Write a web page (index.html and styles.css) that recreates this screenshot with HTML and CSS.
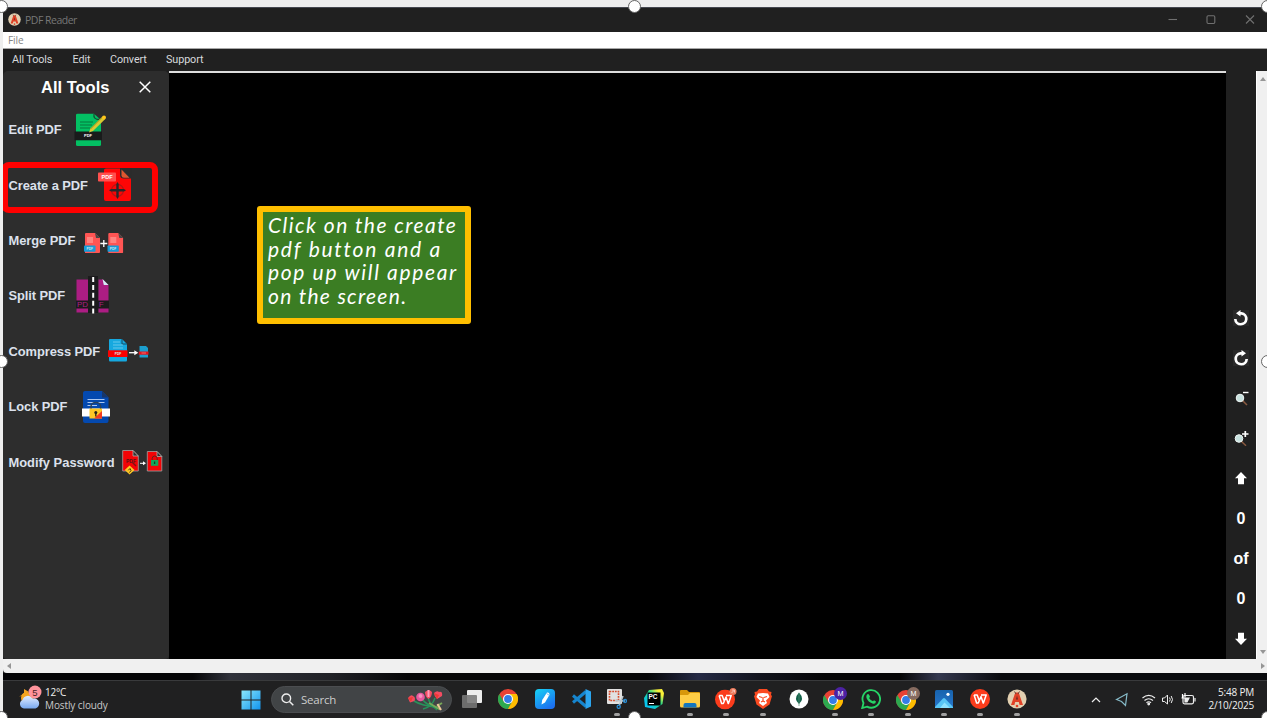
FILE: index.html
```html
<!DOCTYPE html>
<html lang="en">
<head>
<meta charset="utf-8">
<title>PDF Reader</title>
<link rel="stylesheet" href="styles.css">
</head>
<body>
<svg class="defs" width="0" height="0">
  <defs>
    <linearGradient id="win" x1="0" y1="0" x2="1" y2="1"><stop offset="0" stop-color="#8ae8fb"/><stop offset="1" stop-color="#1193ee"/></linearGradient>
    <linearGradient id="pen" x1="0" y1="0" x2=".6" y2="1"><stop offset="0" stop-color="#17d3f5"/><stop offset="1" stop-color="#1c72f0"/></linearGradient>
    <linearGradient id="pyc" x1="0" y1="1" x2="1" y2="0"><stop offset=".2" stop-color="#08c5ee"/><stop offset=".55" stop-color="#21d789"/><stop offset=".8" stop-color="#f8ef38"/></linearGradient>
    <linearGradient id="cloud" x1="0" y1="0" x2="0" y2="1"><stop offset="0" stop-color="#e2edff"/><stop offset="1" stop-color="#78a8ef"/></linearGradient>
    <linearGradient id="photo" x1="0" y1="0" x2="0" y2="1"><stop offset="0" stop-color="#1763ae"/><stop offset="1" stop-color="#2877cc"/></linearGradient>
    <symbol id="chrome" viewBox="0 0 20 20">
      <circle cx="10" cy="10" r="10" fill="#e94235"/>
      <path d="M1.3 5A10 10 0 0 0 10 20L14.3 12.5 10 10 5.7 12.5Z" fill="#2da94f"/>
      <path d="M18.7 5A10 10 0 0 1 10 20L14.3 12.5 10 5Z" fill="#fdbd00"/>
      <circle cx="10" cy="10" r="5" fill="#fff"/><circle cx="10" cy="10" r="3.9" fill="#347de8"/>
    </symbol>
    <symbol id="wps" viewBox="0 0 20 20">
      <circle cx="10" cy="10" r="10" fill="#fb3c1c"/>
      <path d="M4.1 6L6.6 14H8.300L11 7.500 13.200 14H13.400L16.200 6H11M4.100 6H7.200L9 11" fill="none" stroke="#fff" stroke-width="1.500" stroke-linejoin="round"/>
    </symbol>
    <symbol id="appmark" viewBox="0 0 20 20">
      <circle cx="10" cy="10" r="9.6" fill="#e2cfb0"/>
      <path d="M4 16L8.3 3.5H11.7L16 16H12.6L11.8 13H8.2L7.4 16Z" fill="#e04126"/>
      <path d="M9 10.5L10 6.5 11 10.5Z" fill="#6a2a20"/><path d="M7.5 2.5L9 5M12.5 2.5L11 5" stroke="#6b4336"/><circle cx="10" cy="17" r="1.3" fill="#e04126"/>
    </symbol>
    <symbol id="mergefile" viewBox="0 0 16 21">
      <path d="M1 1Q1 0 2 0H11L16 5V19Q16 20 15 20H1Z" fill="#ff5554"/><path d="M11 0L16 5H12Z" fill="#464646"/>
      <path d="M3 4H9V10H3Z" fill="#ff8480"/><rect y="12.5" width="11.5" height="6.3" rx=".8" fill="#169bd8"/>
      <text x="2.500" y="16.900" class="t-merge">PDF</text>
    </symbol>
  </defs>
</svg>

<div class="screen">
  <main class="app">
    <header class="titlebar">
      <svg class="logo" width="13" height="13"><use href="#appmark"/></svg>
      <span class="title">PDF Reader</span>
      <svg class="winctl" width="88" height="14" viewBox="1168 13 88 14" fill="none" stroke="#707070" stroke-width="1.1">
        <path d="M1168.5 19.5H1177"/><rect x="1207" y="15.7" width="7.8" height="7.8" rx="1.2"/><path d="M1246 15.5L1254 23.5M1254 15.5L1246 23.5"/>
      </svg>
    </header>
    <div class="filemenu">File</div>
    <nav class="menubar"><span class="m1">All Tools</span><span class="m2">Edit</span><span class="m3">Convert</span><span class="m4">Support</span></nav>

    <div class="workspace">
      <aside class="tools">
        <div class="tools-head"><h1>All Tools</h1>
          <svg width="12" height="12" viewBox="0 0 12 12"><path d="M.7.7L11.3 11.3M11.3.7L.7 11.3" stroke="#fff" stroke-width="1.5"/></svg>
        </div>
        <div class="tool edit"><span>Edit PDF</span>
          <svg width="34" height="36" viewBox="73 112 34 36">
            <path d="M76 115Q76 113.700 77.500 113.700H94L101 120V144.500Q101 146 99.500 146H77.500Q76 146 76 144.500Z" fill="#03c063"/>
            <path d="M94 114Q93 119.500 99.500 119.500" fill="none" stroke="#174f33" stroke-width="1.3"/>
            <path d="M80 122H93M80 125H92M80 128H90" stroke="#06763e"/>
            <path d="M74.500 131.500H102V140.300H74.500Z" fill="#191b1b"/>
            <text x="84" y="137.300" class="t-pdf">PDF</text>
            <path d="M89 132.500L90.500 128.500 102.500 116.500 105 119.200 93 131Z" fill="#d8c832"/><path d="M90.500 129L102.500 117" stroke="#9c9622"/>
            <circle cx="104" cy="117.600" r="2" fill="#ffc51b"/>
          </svg></div>
        <div class="tool create"><span>Create a PDF</span>
          <svg width="36" height="36" viewBox="97 168 36 36">
            <path d="M104 171Q104 169.500 106 169.500H121L131 179V200Q131 202 129 202H106Q104 202 104 200Z" fill="#fe0606"/>
            <path d="M120 169V176Q120 179.500 124 179.500H132V169Z" fill="#2c2c2c"/><path d="M121.500 170.500L129.500 178.800H124Q121.500 178.800 121.500 176.500Z" fill="#df5630"/>
            <rect x="98" y="173.500" width="18" height="9" rx=".8" fill="#ff504e"/><text x="101.500" y="180.200" class="t-create">PDF</text>
            <circle cx="117.500" cy="191.300" r="6" fill="none" stroke="#b31616" stroke-width="1.200"/>
            <path d="M116.300 185L117.500 183 118.700 185V190H124L126 191.300 124 192.500H118.700V198L117.500 200 116.300 198V192.500H111L109 191.300 111 190H116.300Z" fill="#28282b"/>
          </svg></div>
        <div class="tool merge"><span>Merge PDF</span>
          <svg width="42" height="22" viewBox="83 233 42 22"><use href="#mergefile" x="84" y="234" width="16" height="21"/><use href="#mergefile" x="107.300" y="234" width="16" height="21"/><path d="M103.800 241V248M100.300 244.500H107.300" stroke="#fff" stroke-width="1.300"/></svg></div>
        <div class="tool split"><span>Split PDF</span>
          <svg width="36" height="40" viewBox="75 275 36 40">
            <path d="M76.500 279.500H88V312.500H76.500ZM98.500 279.500H103L108.500 285V312.500H98.500Z" fill="#ac1d83"/><path d="M102.500 279L108.500 285H103.800Z" fill="#d5edf7"/>
            <path d="M76 300.500H88V308.500H76ZM98 300.500H109V308.500H98ZM88 276H98V313H88Z" fill="#1c1b1d"/>
            <text x="77" y="307.300" class="t-split">PD</text><text x="98.800" y="307.300" class="t-split">F</text>
            <path d="M93.200 277V315" stroke="#fff" stroke-width="2" stroke-dasharray="5 2.900"/>
          </svg></div>
        <div class="tool compress"><span>Compress PDF</span>
          <svg width="42" height="26" viewBox="108 339 42 26">
            <path d="M109 341Q109 340 110 340H122L127 345V361Q127 362.500 126 362.500H110Q109 362.500 109 361Z" fill="#16a8df"/><path d="M122 340V345H127" fill="none" stroke="#174a64"/><path d="M113 343H120M113 346H123M113 349H123" stroke="#78d1ee" stroke-width=".8"/>
            <rect x="108" y="351.300" width="19.500" height="6.700" fill="#fb0000"/><text x="114.800" y="356.400" class="t-tiny">PDF</text>
            <path d="M129 353.700H136" stroke="#fff" stroke-width="1.300"/><path d="M134.300 351.200L138.300 353.700 134.300 356.200Z" fill="#fff"/>
            <path d="M139.500 347H146L148 349V358.500H139.500Z" fill="#1b9ece"/><rect x="138.800" y="352.500" width="9.700" height="3.200" fill="#e71319"/><path d="M141.500 354H146" stroke="#ed9b9d" stroke-width=".7"/>
          </svg></div>
        <div class="tool lock"><span>Lock PDF</span>
          <svg width="30" height="34" viewBox="81 390 30 34">
            <path d="M83 393Q83 391 85 391H102L108.500 397.500V421Q108.500 423 106.500 423H85Q83 423 83 421Z" fill="#0449af"/><path d="M102 391V397.500H108.500Z" fill="#17366a"/>
            <path d="M87.500 399.500H104.500M87.500 402.500H104.500M87.500 405.500H97" stroke="#d8e7ff" stroke-width=".8"/><path d="M82 408.500H110V416.500H82Z" fill="#fff"/>
            <path d="M91 409V406.500A4.800 4 0 0 1 100.600 406.500V409" fill="none" stroke="#29415d" stroke-width="1.500"/>
            <path d="M89.500 408.500H102V418.500H89.500Z" fill="#fdc727"/><path d="M102 411V418.500H94Z" fill="#f33b22"/><circle cx="95.800" cy="412.500" r="1.500" fill="#262318"/><path d="M95.800 413V416.500" stroke="#262318" stroke-width="1.300"/>
          </svg></div>
        <div class="tool modify"><span>Modify Password</span>
          <svg width="42" height="26" viewBox="121 450 42 26">
            <path d="M122.700 451.500H133L138.300 457V472H122.700Z" fill="#f40306" stroke="#a2a2a2" stroke-width=".8"/><path d="M133 451.500V457H138.300Z" fill="#333" stroke="#bbb" stroke-width=".7"/>
            <text x="126" y="463.500" class="t-dark">PDF</text><path d="M132 463L136 467" stroke="#7d1414" stroke-width="1.500"/>
            <path d="M129.600 466.500L134.500 471 129.600 475.500 124.700 471Z" fill="#ffc724"/><path d="M128.300 471.300L130 469.500 131 471.500 129.500 473.500" fill="none" stroke="#473a13"/>
            <path d="M140 464.300H144" stroke="#fff"/><path d="M143 462.300L146 464.300 143 466.300Z" fill="#fff"/>
            <path d="M147.300 452.500H157L161.800 457.500V472H147.300Z" fill="#f40306" stroke="#a2a2a2" stroke-width=".8"/><path d="M157 452.500V457.500H161.800Z" fill="#333" stroke="#bbb" stroke-width=".7"/>
            <path d="M152.200 461.500V459.500A2.500 2.500 0 0 1 157.200 459.500V461.500" fill="none" stroke="#67211d"/><rect x="151" y="461" width="7.300" height="5.800" fill="#14a55a"/><path d="M154.600 462.500V465" stroke="#123d24" stroke-width="1.300"/>
          </svg></div>
      </aside>

      <section class="document"><p class="callout"><span class="c1">Click on the create</span><span class="c2">pdf button and a</span><span class="c3">pop up will appear</span><span class="c4">on the screen.</span></p></section>

      <aside class="viewer">
        <svg width="16" height="16" viewBox="0 0 16 16"><rect width="16" height="16" fill="#292929"/><path d="M5 3.300H8.500A5.500 5.500 0 1 1 2.300 9" fill="none" stroke="#fff" stroke-width="2.700"/><path d="M3 3.300L7.500 0V6.500Z" fill="#fff"/></svg>
        <svg width="16" height="16" viewBox="0 0 16 16"><rect width="16" height="16" fill="#292929"/><path d="M11 3.300H7.500A5.500 5.500 0 1 0 13.700 9" fill="none" stroke="#fff" stroke-width="2.700"/><path d="M13 3.300L8.500 0V6.500Z" fill="#fff"/></svg>
        <svg width="16" height="16" viewBox="0 0 16 16"><path d="M9 10L14 15" stroke="#8a5a40" stroke-width="1.500"/><circle cx="7" cy="8" r="3.800" fill="#c8e2df" stroke="#f0f6f5"/><path d="M10 2.500H15.500" stroke="#fff" stroke-width="1.400"/></svg>
        <svg width="16" height="16" viewBox="0 0 16 16"><path d="M8 11L13 15.700" stroke="#8a5a40" stroke-width="1.500"/><circle cx="6" cy="8.500" r="3.800" fill="#c8e2df" stroke="#f0f6f5"/><path d="M9 4H15.500M12.300 1V7" stroke="#fff" stroke-width="1.700"/></svg>
        <svg width="14" height="14" viewBox="0 0 14 14"><path d="M7 1L13 7.300H10V13.300H4V7.300H1Z" fill="#fff"/></svg>
        <b>0</b><b>of</b><b>0</b>
        <svg width="14" height="14" viewBox="0 0 14 14"><path d="M7 13L13 6.700H10V.700H4V6.700H1Z" fill="#fff"/></svg>
      </aside>
      <div class="vscroll"><svg width="8" height="6"><path d="M1 5L4 1 7 5Z"/></svg><svg width="8" height="6"><path d="M1 1L4 5 7 1Z"/></svg></div>
    </div>
    <div class="hscroll"><svg width="6" height="8"><path d="M5 1L1 4 5 7Z"/></svg><svg width="6" height="8"><path d="M1 1L5 4 1 7Z"/></svg></div>
  </main>

  <div class="wallpaper"></div>
  <footer class="taskbar">
    <div class="weather">
      <svg width="24" height="26" viewBox="18 684 24 26"><circle cx="27" cy="697" r="6" fill="#f4a51e"/><path d="M19 696L24 692V688L29 691Z" fill="#f4a51e"/><path d="M24 707.500A4.500 4.500 0 0 1 22.500 699 5.500 5.500 0 0 1 32.500 697.500 5 5 0 0 1 35.500 707.500Z" fill="url(#cloud)"/><circle cx="35" cy="691" r="6.500" fill="#ff939c"/><text x="32.300" y="694.600" class="t-badge">5</text></svg>
      <div><span>12°C</span><span class="cloudy">Mostly cloudy</span></div>
    </div>
    <svg class="start" width="20" height="20" viewBox="0 0 20 20"><path d="M.5.500H9.500V9.500H.5ZM10.500.500H19.500V9.500H10.500ZM.5 10.500H9.500V19.500H.5ZM10.500 10.500H19.500V19.500H10.500Z" fill="url(#win)"/></svg>
    <div class="search">
      <svg width="13" height="13" viewBox="0 0 13 13"><circle cx="5.300" cy="5.300" r="4.300" fill="none" stroke="#eee" stroke-width="1.400"/><path d="M8.500 8.500L12.300 12.300" stroke="#eee" stroke-width="1.500"/></svg>
      <span>Search</span>
      <svg width="38" height="22" viewBox="408 689 38 22"><path d="M415 701Q423 706 438 707M422 698Q429 707 441 709M429 697Q430 704 438 710M436 698Q433 707 424 709" fill="none" stroke="#27945b" stroke-width="1.500"/><path d="M430 703L441 709.500M438 706L443 703" stroke="#78a857" stroke-width="2"/><path d="M409 698Q412 694 414 696 417 697 415.500 701L411 702.500ZM426 692Q430 688.500 433 692 433 697 429.500 699 426 697 426 692ZM435 693Q438 690 440 692 444 691 443 696L438 699Q435 696 435 693Z" fill="#f44c62"/><path d="M409 698L414 697 412 702ZM435 693L440 695 438 699Z" fill="#ee3934"/><circle cx="421.500" cy="697" r="4.300" fill="#e6589e"/><circle cx="421.500" cy="696" r="2" fill="#f691bd"/><path d="M429.500 690V697" stroke="#ff9dbb" stroke-width="2"/><path d="M438.500 704L442 710" stroke="#efc69a" stroke-width="2"/></svg>
    </div>
    <div class="apps">
      <div><svg width="20" height="20" viewBox="0 0 20 20"><rect x="5" y="1" width="15" height="13" rx="1" fill="#ededed"/><rect x="0" y="6" width="15" height="13" rx="1" fill="#777" fill-opacity=".88"/></svg></div>
      <div><svg width="20" height="20"><use href="#chrome"/></svg></div>
      <div><svg width="20" height="20" viewBox="0 0 20 20"><rect width="20" height="20" rx="4" fill="url(#pen)"/><path d="M6.500 15.500L7.200 11 12 3.500Q14.500 3 14.500 5.800L10 13.500Z" fill="#fff"/><path d="M11.500 4.500L14.200 6.300" stroke="#71c5fa"/></svg></div>
      <div><svg width="20" height="20" viewBox="0 0 20 20"><path d="M15 2.500L2 13.500M15 17.500L2 6.500" stroke="#1685ce" stroke-width="3"/><path d="M14.500 0L20 2.500V17.500L14.500 20Z" fill="#2ba5ef"/></svg></div>
      <div class="open"><svg width="20" height="20" viewBox="0 0 20 20"><rect x="0" y="0" width="15" height="15" rx="1" fill="#e1e1e1"/><rect x="2.500" y="2.500" width="9" height="9" fill="none" stroke="#d74d2e" stroke-width="1.600" stroke-dasharray="1.800 .9"/><path d="M12 17L16 7M8 11.500L18 12" stroke="#b9c6ce" stroke-width="1.600"/><circle cx="11.700" cy="17.800" r="1.600" fill="none" stroke="#258ad2" stroke-width="1.300"/><circle cx="18" cy="12" r="1.500" fill="none" stroke="#258ad2" stroke-width="1.300"/></svg></div>
      <div><svg width="20" height="20" viewBox="0 0 20 20"><path d="M5 1L18 0 20 4 18.500 15 11 20 1 18 0 9Z" fill="url(#pyc)"/><rect x="3.500" y="3.500" width="13" height="13" fill="#000"/><text x="4.500" y="10" class="t-pc">PC</text><path d="M5 14.500H10" stroke="#fff"/></svg></div>
      <div class="open"><svg width="20" height="20" viewBox="0 0 20 20"><path d="M0 2Q0 1 1 1H7L9 3H19Q20 3 20 4V9H0Z" fill="#d8980b"/><path d="M0 6H8L10 4H19.200Q20 4 20 5V17Q20 18.500 18.500 18.500H1.500Q0 18.500 0 17Z" fill="#ffcd45"/><path d="M3.500 18.500V16Q3.500 14 5.500 14H14.500Q16.500 14 16.500 16V18.500Z" fill="#1475be"/></svg></div>
      <div class="open"><svg width="22" height="22" viewBox="0 0 22 22"><use href="#wps" x="0" y="1.500" width="20" height="20"/><circle cx="18" cy="3.500" r="3.500" fill="#ed7b5c"/><path d="M16.500 5L19.500 2M17 2H19.500V4.500" fill="none" stroke="#f7c5b8"/></svg></div>
      <div class="open"><svg width="18" height="20" viewBox="0 0 18 20"><path d="M5 0H13L15 2.500 17.500 3 17 6 18 7 15.500 15.500 9 20 2.500 15.500 0 7 1 6 .5 3 3 2.500Z" fill="#fb4a20"/><path d="M4 4.500L9 4 14 4.500 15.500 8 12 11.500 13 14 9 17 5 14 6 11.500 2.500 8Z" fill="#fff"/><path d="M5 7.500L8 8.500M13 7.500L10 8.500M9 8V12M7 13L9 12 11 13" fill="none" stroke="#fb4a20" stroke-width="1.200"/></svg></div>
      <div><svg width="20" height="20" viewBox="0 0 20 20"><circle cx="10" cy="10" r="9.500" fill="#fff"/><path d="M10 3.500Q4 10 10 15Q16 10 10 3.500Z" fill="#126149"/><path d="M10 4V17" stroke="#59927b" stroke-width=".7"/></svg></div>
      <div class="open"><svg width="24" height="24" viewBox="0 0 24 24"><use href="#chrome" x="0" y="3" width="20" height="20"/><circle cx="17.500" cy="6.500" r="6.500" fill="#4c22a4"/><text x="14.500" y="9" class="t-m">M</text></svg></div>
      <div class="open"><svg width="20" height="20" viewBox="0 0 20 20"><path d="M1.200 19L2.500 14A8.800 8.800 0 1 1 6 17.600Z" fill="none" stroke="#26d467" stroke-width="1.800"/><path d="M6 5.500Q7.500 4 8.500 6.500L9 8 8 9Q9.500 11.500 12 12.300L13 11.200 15 12.500Q14.500 15.500 11.500 14.500 7 13 5.500 9 5 6.500 6 5.500Z" fill="#26d467"/></svg></div>
      <div class="open"><svg width="24" height="24" viewBox="0 0 24 24"><use href="#chrome" x="0" y="3" width="20" height="20"/><circle cx="17.500" cy="6.500" r="6.500" fill="#866b60"/><text x="14.500" y="9" class="t-m">M</text></svg></div>
      <div class="open"><svg width="18" height="18" viewBox="0 0 18 18"><rect width="18" height="18" rx="1.500" fill="url(#photo)"/><path d="M0 17L8 8.500Q9 7.500 10 8.500L18 17V18H0Z" fill="#58c6f6"/><path d="M5 18L9.500 12.500 15 18Z" fill="#8ee3ff"/><circle cx="13" cy="4.300" r="1.600" fill="#fff"/></svg></div>
      <div class="open"><svg width="20" height="20"><use href="#wps"/></svg></div>
      <div class="open"><svg width="20" height="20"><use href="#appmark"/></svg></div>
    </div>
    <svg class="tray" width="106" height="16" viewBox="1090 692 106 16" fill="none" stroke="#eee" stroke-width="1.200">
      <path d="M1092 702L1096 698 1100 702"/><path d="M1116.500 699.500L1127 693.800 1125.500 705.500 1121.500 701.500Z" stroke="#87bbc9"/>
      <path d="M1142.500 698Q1148.700 692.800 1155 698M1144.500 700.500Q1148.700 697 1153 700.500M1146.500 702.700Q1148.700 700.800 1151 702.700"/><circle cx="1148.700" cy="704" r=".8" fill="#eee"/>
      <path d="M1162.500 698H1164.500L1167.500 695V704L1164.500 701.500H1162.500ZM1169.500 697.500Q1171 699.500 1169.500 701.500M1171.200 696Q1173.800 699.500 1171.200 703" stroke-width="1"/>
      <rect x="1183" y="695.500" width="10.500" height="8.300" rx="1.500"/><path d="M1195 698V701.500"/><path d="M1185 698H1189L1187 702H1185Z" fill="#eee"/><path d="M1182.500 694V698M1185 693V697M1181.500 698H1185.500" stroke="#fff"/>
    </svg>
    <div class="clock"><span class="time">5:48 PM</span><span>2/10/2025</span></div>
  </footer>

  <div class="highlight"></div>
  <i class="handle tl"></i><i class="handle tc"></i><i class="handle tr"></i><i class="handle ml"></i><i class="handle mr"></i><i class="handle bl"></i><i class="handle bc"></i><i class="handle br"></i>
</div>
</body>
</html>
```

FILE: styles.css
```css
* { box-sizing: border-box; }
body { margin: 0; background: #eee; overflow: hidden; font-family: "Liberation Sans", Arial, sans-serif; }
svg { display: block; flex: none; }
.defs { position: absolute; }
.screen { position: relative; width: 1267px; height: 718px; padding: 7px 0 0 3px; overflow: hidden; background: #eee; display: flex; flex-direction: column; }
.app { height: 666px; flex: none; background: #202020; border-top: 1px solid #454850; }
.titlebar { height: 24px; display: flex; align-items: center; padding: 0 0 1px 5px; color: #777; font: 10.5px "Open Sans", sans-serif; background: #202020; }
.title { margin-left: 4px; letter-spacing: -.5px; }
.winctl { margin-left: auto; margin-right: 11px; }
.filemenu { height: 17px; padding-left: 5px; background: #fff; border-bottom: 1px solid #a7a7a7; color: #858585; font: 10px/17px "Open Sans", sans-serif; letter-spacing: -.1px; }
.menubar { height: 22px; display: flex; align-items: center; padding: 0 0 2px 9px; color: #d7d9dc; font: 10.8px Roboto, sans-serif; letter-spacing: -.1px; }
.m1 { width: 60.500px; } .m2 { width: 37.5px; } .m3 { width: 56px; }
.workspace { height: 588px; display: grid; grid-template-columns: 166px 1057px 30px 11px; }
.tools { background: #2d2d2d; border-radius: 5px 5px 4px 4px; color: #dce1ec; }
.tools-head { height: 31px; display: flex; align-items: center; padding-left: 38px; }
.tools-head h1 { width: 98px; margin: 0; color: #fff; font-size: 16.500px; line-height: 20px; }
.tool { height: 55.400px; display: flex; align-items: center; padding-left: 5.500px; font-weight: bold; font-size: 12.900px; white-space: nowrap; }
.tool span { flex: none; letter-spacing: -.07px; }
.edit span { width: 64.500px; } .create span { width: 88.500px; } .merge span { width: 74.500px; } .split span { width: 66.500px; } .compress span { width: 99.500px; } .lock span { width: 72.500px; } .modify span { width: 112.500px; letter-spacing: 0; }
.merge svg { margin-top: 5px; }
.split svg { margin-top: -1px; }
.document { background: #000; border-top: 2px solid #ddd; padding: 133px 0 0 88px; }
.callout { width: 214px; height: 118px; margin: 0; padding: 1px 0 0 5px; border: 6px solid #ffbf00; border-radius: 3px; background: #3b7d23; color: #fff; font: italic 21px/23.500px Lato, sans-serif; white-space: nowrap; }
.callout span { display: block; height: 23.500px; }
.c1 { letter-spacing: 1.450px; } .c2 { letter-spacing: 1.750px; } .c3 { letter-spacing: 1.650px; } .c4 { letter-spacing: 1.300px; }
.viewer { background: #202020; display: grid; grid-auto-rows: 40.200px; justify-items: center; align-items: center; align-content: start; padding-top: 226.500px; color: #fff; font-size: 16px; }
.viewer b { padding-top: 1px; }
.vscroll { background: #f0f0f0; border-left: 1px solid #fff; display: flex; flex-direction: column; justify-content: space-between; padding: 5px 0 4px 2px; fill: #969696; }
.hscroll { height: 14px; background: #f0f0f0; border-radius: 0 0 0 4px; display: flex; align-items: center; justify-content: space-between; padding: 0 1px 0 3px; fill: #969696; }
.wallpaper { height: 7px; flex: none; background: linear-gradient(90deg, #050507 0 15%, #30323b 18%, #202126 26%, #060607 32% 51%, #252a45 55%, #11131c 60%, #050506 65% 71%, #34384f 74%, #090a0d 79%); }
.taskbar { height: 38px; flex: none; display: flex; align-items: center; background: #202021; border-top: 1px solid #393a3c; color: #f0f0f0; font: 10px/13px "Open Sans", sans-serif; }
.weather { width: 237.500px; height: 37px; padding: 0 0 3px 15px; display: flex; align-items: center; }
.weather div { margin-left: 3px; padding-top: 2px; }
.weather span, .clock span { display: block; letter-spacing: -.2px; }
.weather .cloudy { color: #c9c9c9; letter-spacing: -.1px; }
.search { width: 181px; height: 27px; margin-left: 10px; border-radius: 14px; background: #414446; border: 1px solid #4b4d50; display: flex; align-items: center; padding: 0 6px 0 9px; font-size: 11.500px; color: #ccc; }
.search span { margin-left: 7.500px; letter-spacing: -.2px; }
.search svg:last-child { margin-left: auto; }
.apps { width: 581px; height: 37px; margin-left: 2.500px; display: grid; grid-template-columns: repeat(16, 36.300px); }
.apps > div { display: grid; grid-template-rows: 30px 3px; align-items: center; justify-items: center; padding-top: 3px; }
.apps .open::after { content: ""; width: 6px; height: 3px; border-radius: 2px; background: #a0a0a0; margin-top: -3px; }
.tray { margin-left: 55px; }
.clock { margin-left: auto; padding: 0 13px 2px 0; text-align: right; }
.handle { position: absolute; width: 13px; height: 13px; border-radius: 50%; background: #fff; border: 1px solid #656565; }
.tl, .ml, .bl { left: -5px; } .tc, .bc { left: 628px; } .tr, .mr, .br { left: 1261px; }
.tl, .tc, .tr { top: 0; } .ml, .mr { top: 355px; } .bl, .bc, .br { top: 711px; }
.highlight { position: absolute; left: 1px; top: 162px; width: 157px; height: 51px; border: 6px solid #f00; border-left-width: 7px; border-radius: 8px; clip-path: inset(0 0 0 2px); }
text { font-family: "Liberation Sans", sans-serif; font-weight: bold; }
.t-pdf { font-size: 4px; fill: #fff; }
.t-create { font-size: 5.500px; fill: #fff; }
.t-merge, .t-tiny { font-size: 3.200px; fill: #d7e9ef; }
.t-split { font-size: 8px; font-weight: normal; fill: #ac1d83; }
.t-dark { font-size: 5px; fill: #5a1515; }
.t-badge { font-size: 9.500px; font-weight: normal; fill: #472326; }
.t-pc { font-size: 6.500px; fill: #fff; }
.t-m { font-size: 7.200px; font-weight: normal; fill: #fff; }
```
